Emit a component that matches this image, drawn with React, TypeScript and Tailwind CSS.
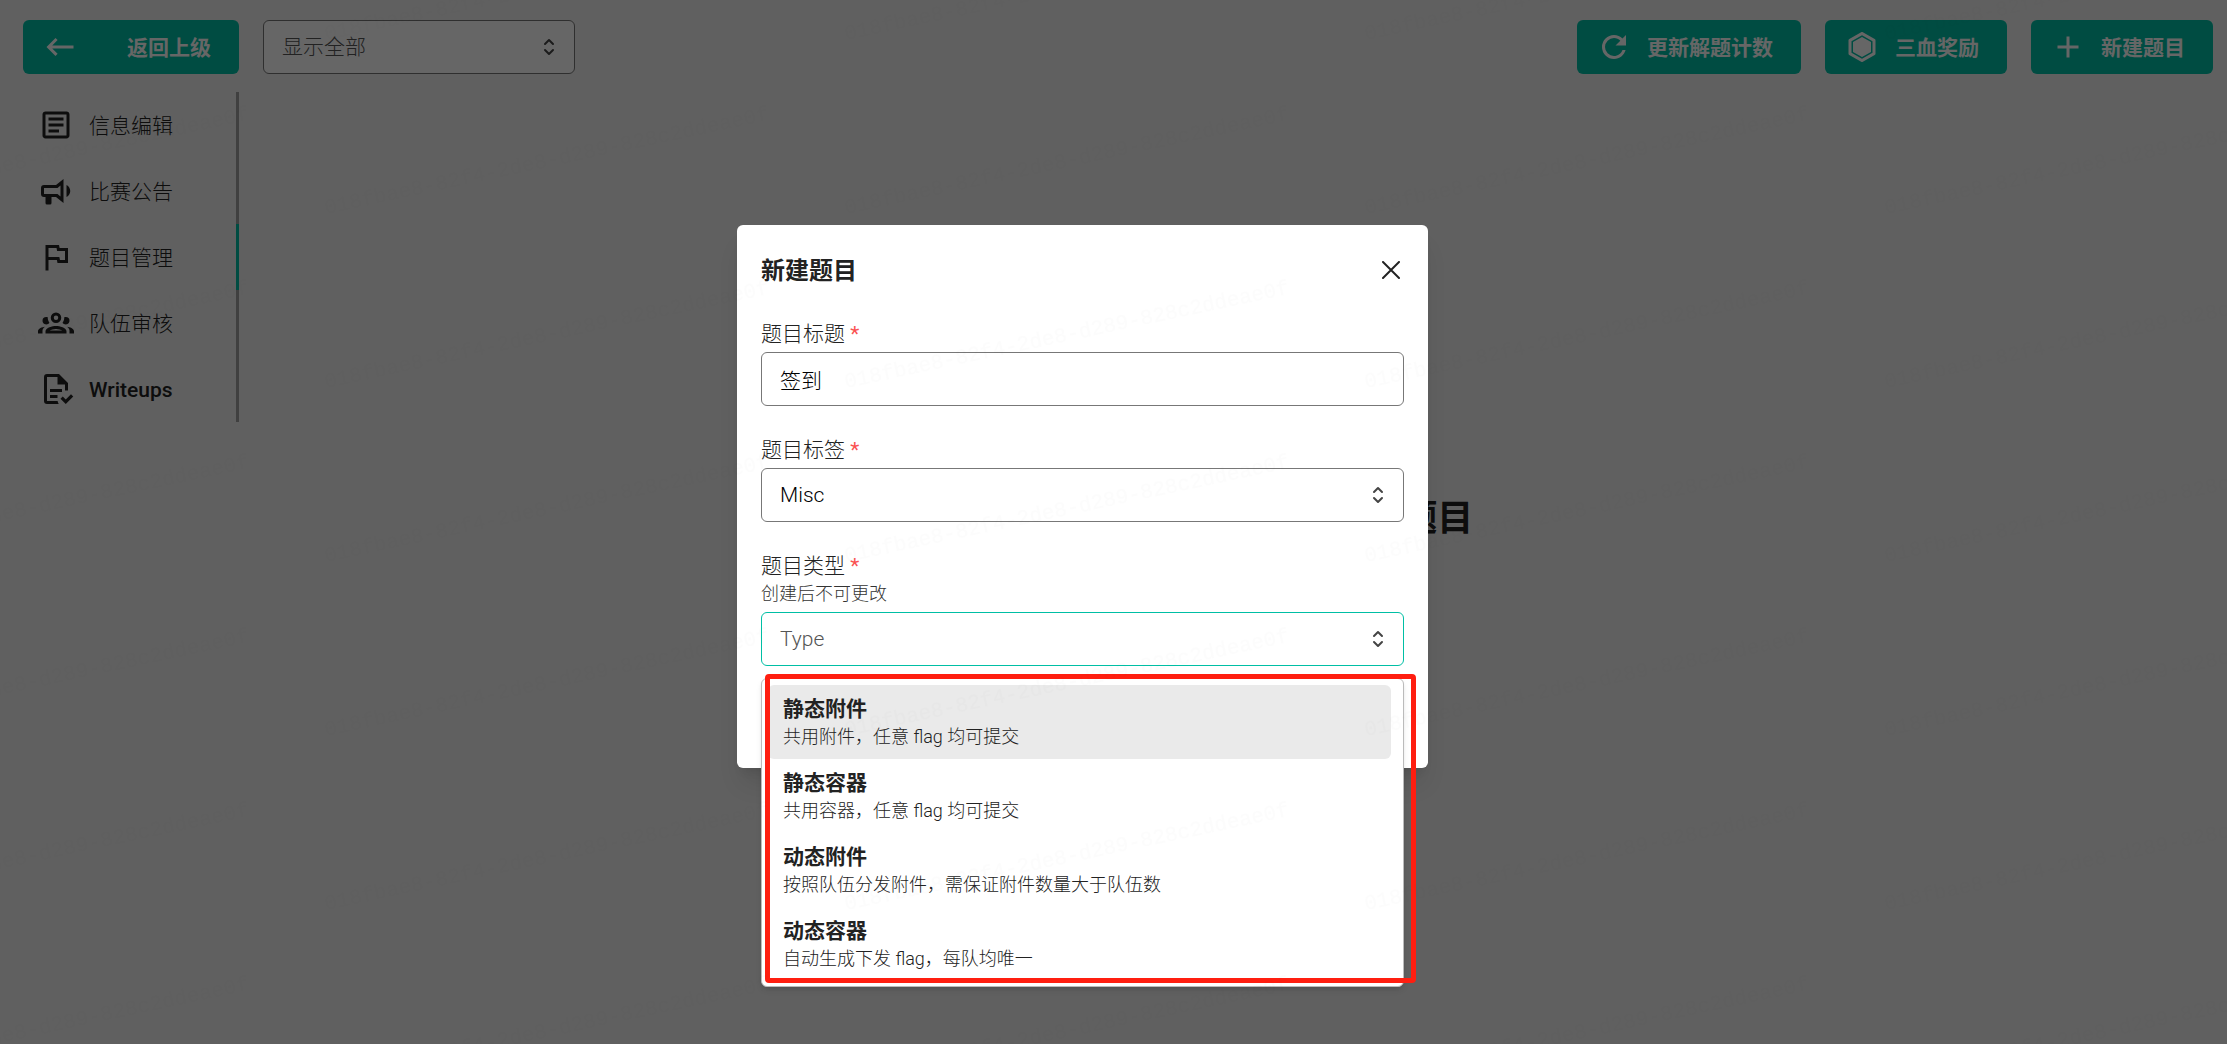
import { useState } from 'react';
import type { ReactNode } from 'react';

const icons = {
  back: 'M21,11H6.83L10.41,7.41L9,6L3,12L9,18L10.41,16.58L6.83,13H21V11Z',
  refresh:
    'M17.65,6.35C16.2,4.9 14.21,4 12,4A8,8 0 0,0 4,12A8,8 0 0,0 12,20C15.73,20 18.84,17.45 19.73,14H17.65C16.83,16.33 14.61,18 12,18A6,6 0 0,1 6,12A6,6 0 0,1 12,6C13.66,6 15.14,6.69 16.22,7.78L13,11H20V4L17.65,6.35Z',
  hexagon:
    'M21,16.5C21,16.88 20.79,17.21 20.47,17.38L12.57,21.82C12.41,21.94 12.21,22 12,22C11.79,22 11.59,21.94 11.43,21.82L3.53,17.38C3.21,17.21 3,16.88 3,16.5V7.5C3,7.12 3.21,6.79 3.53,6.62L11.43,2.18C11.59,2.06 11.79,2 12,2C12.21,2 12.41,2.06 12.57,2.18L20.47,6.62C20.79,6.79 21,7.12 21,7.5V16.5M12,4.15L5,8.09V15.91L12,19.85L19,15.91V8.09L12,4.15M12,5.3L18,8.68V15.32L12,18.7L6,15.32V8.68L12,5.3Z',
  plus: 'M19,13H13V19H11V13H5V11H11V5H13V11H19V13Z',
  textBox:
    'M5,3C3.89,3 3,3.89 3,5V19C3,20.11 3.89,21 5,21H19C20.11,21 21,20.11 21,19V5C21,3.89 20.11,3 19,3H5M5,5H19V19H5V5M7,7V9H17V7H7M7,11V13H17V11H7M7,15V17H14V15H7Z',
  bullhorn:
    'M12,8H4A2,2 0 0,0 2,10V14A2,2 0 0,0 4,16H5V20A1,1 0 0,0 6,21H8A1,1 0 0,0 9,20V16H12L17,20V4L12,8M15,15.6L13,14H4V10H13L15,8.4V15.6M21.5,12C21.5,13.71 20.54,15.26 19,16V8C20.53,8.75 21.5,10.3 21.5,12Z',
  flag: 'M12.36,6L12.76,8H18V14H14.64L14.24,12H7V6H12.36M14,4H5V21H7V14H12.6L13,16H20V6H14.4L14,4Z',
  group:
    'M12,5A3.5,3.5 0 0,0 8.5,8.5A3.5,3.5 0 0,0 12,12A3.5,3.5 0 0,0 15.5,8.5A3.5,3.5 0 0,0 12,5M12,7A1.5,1.5 0 0,1 13.5,8.5A1.5,1.5 0 0,1 12,10A1.5,1.5 0 0,1 10.5,8.5A1.5,1.5 0 0,1 12,7M5.5,8A2.5,2.5 0 0,0 3,10.5C3,11.44 3.53,12.25 4.29,12.68C4.65,12.88 5.06,13 5.5,13C5.94,13 6.35,12.88 6.71,12.68C7.08,12.47 7.39,12.17 7.62,11.81C6.89,10.86 6.5,9.7 6.5,8.5C6.5,8.41 6.5,8.31 6.5,8.22C6.2,8.08 5.86,8 5.5,8M18.5,8C18.14,8 17.8,8.08 17.5,8.22C17.5,8.31 17.5,8.41 17.5,8.5C17.5,9.7 17.11,10.86 16.38,11.81C16.5,12 16.63,12.15 16.78,12.3C16.94,12.45 17.1,12.58 17.29,12.68C17.65,12.88 18.06,13 18.5,13C18.94,13 19.35,12.88 19.71,12.68C20.47,12.25 21,11.44 21,10.5A2.5,2.5 0 0,0 18.5,8M12,14C9.66,14 5,15.17 5,17.5V19H19V17.5C19,15.17 14.34,14 12,14M4.71,14.55C2.78,14.78 0,15.76 0,17.5V19H3V17.07C3,16.06 3.69,15.22 4.71,14.55M19.29,14.55C20.31,15.22 21,16.06 21,17.07V19H24V17.5C24,15.76 21.22,14.78 19.29,14.55M12,16C13.53,16 15.24,16.5 16.23,17H7.77C8.76,16.5 10.47,16 12,16Z',
  fileCheck:
    'M23.5,17L18.5,22L15,18.5L16.5,17L18.5,19L22,15.5L23.5,17M6,2A2,2 0 0,0 4,4V20A2,2 0 0,0 6,22H13.81C13.45,21.38 13.2,20.7 13.08,20H6V4H13V9H18V13.08C18.33,13.03 18.67,13 19,13C19.34,13 19.67,13.03 20,13.08V8L14,2M8,12V14H16V12M8,16V18H13V16Z',
};

const tabs: { label: string; icon: keyof typeof icons }[] = [
  { label: '信息编辑', icon: 'textBox' },
  { label: '比赛公告', icon: 'bullhorn' },
  { label: '题目管理', icon: 'flag' },
  { label: '队伍审核', icon: 'group' },
  { label: 'Writeups', icon: 'fileCheck' },
];

const challengeTypes = [
  { label: '静态附件', desc: '共用附件，任意 flag 均可提交' },
  { label: '静态容器', desc: '共用容器，任意 flag 均可提交' },
  { label: '动态附件', desc: '按照队伍分发附件，需保证附件数量大于队伍数' },
  { label: '动态容器', desc: '自动生成下发 flag，每队均唯一' },
];

function Icon({ name }: { name: keyof typeof icons }) {
  return (
    <svg viewBox="0 0 24 24" className="size-9 shrink-0 fill-current" fillRule="evenodd" aria-hidden="true">
      <path d={icons[name]} />
    </svg>
  );
}

function ActionButton({ icon, className = '', children }: { icon: keyof typeof icons; className?: string; children: ReactNode }) {
  return (
    <button
      type="button"
      className={`flex h-[54px] shrink-0 items-center gap-[15px] rounded-md bg-[#00bfa5] pr-7 pl-[19px] font-bold text-white ${className}`}
    >
      <Icon name={icon} />
      <span className="pt-0.5">{children}</span>
    </button>
  );
}

function Chevrons() {
  return (
    <svg
      viewBox="0 0 24 24"
      className="pointer-events-none col-start-1 row-start-1 mr-[14px] size-6 self-center justify-self-end"
      fill="none"
      stroke="#444"
      strokeWidth="2"
      strokeLinecap="round"
      strokeLinejoin="round"
      aria-hidden="true"
    >
      <path d="M8 9l4-4l4 4M16 15l-4 4l-4-4" />
    </svg>
  );
}

const fieldClass = 'col-start-1 row-start-1 h-[54px] w-full appearance-none rounded-md border bg-white px-[18px]';

function FieldLabel({ htmlFor, children }: { htmlFor: string; children: ReactNode }) {
  return (
    <label htmlFor={htmlFor} className="block h-[34px] leading-8">
      {children}
      <span className="font-normal text-[#fa5252]"> *</span>
    </label>
  );
}

function Watermark() {
  return (
    <svg className="pointer-events-none absolute inset-0 size-full" aria-hidden="true">
      <defs>
        <pattern id="watermark" x="840" y="260" width="520" height="174" patternUnits="userSpaceOnUse">
          <text
            x="6"
            y="128"
            transform="rotate(-12 6 128)"
            className="fill-black/1 font-['Liberation_Mono',monospace] text-[21px]"
          >
            018fbae8-82f4-2de8-d289-828c2ddeae0f
          </text>
        </pattern>
      </defs>
      <rect width="100%" height="100%" fill="url(#watermark)" />
    </svg>
  );
}

export default function App() {
  const [title, setTitle] = useState('签到');
  const [type, setType] = useState('');

  return (
    <div className="relative flex min-h-screen flex-col bg-[#f0f0f0] font-['Roboto','Noto_Sans_CJK_SC',sans-serif] text-[21px] leading-8 font-light text-[#222]">
      <header className="flex items-center gap-6 pt-5 pr-[14px] pl-[23px]">
        <ActionButton icon="back" className="w-[216px] justify-between">
          返回上级
        </ActionButton>
        <div className="grid w-[312px]">
          <select aria-label="题目筛选" className={`${fieldClass} border-[#777] text-[#555]`}>
            <option>显示全部</option>
          </select>
          <Chevrons />
        </div>
        <div className="ml-auto flex gap-6">
          <ActionButton icon="refresh">更新解题计数</ActionButton>
          <ActionButton icon="hexagon">三血奖励</ActionButton>
          <ActionButton icon="plus">新建题目</ActionButton>
        </div>
      </header>

      <div className="flex flex-1 gap-6 pt-[18px] pr-[14px] pl-[23px]">
        <nav className="flex w-[216px] shrink-0 flex-col">
          {tabs.map((tab) => (
            <a
              key={tab.label}
              href="#"
              className={`flex h-[66px] items-center gap-[15px] border-r-[3px] pl-[15px] ${
                tab.label === '题目管理' ? 'border-[#00bfa5]' : 'border-[#a0a0a0]'
              }`}
            >
              <Icon name={tab.icon} />
              <span className={`pt-0.5 ${tab.label === 'Writeups' ? 'font-medium' : ''}`}>{tab.label}</span>
            </a>
          ))}
        </nav>
        <main className="flex flex-1 flex-col items-center pt-[400px] pl-11">
          <h2 className="text-[36px] leading-[54px] font-bold">Ouch! 这个比赛还没有题目</h2>
        </main>
      </div>

      <div className="absolute inset-0 flex justify-center bg-black/60 pt-[225px] pr-[62px]">
        <section
          role="dialog"
          aria-labelledby="dialog-title"
          className="flex w-[691px] flex-col self-start rounded-md bg-white px-6 pt-6 pb-[102px] shadow-xl"
        >
          <div className="flex h-[42px] items-center justify-between">
            <h1 id="dialog-title" className="pt-0.5 text-2xl font-bold">
              新建题目
            </h1>
            <button type="button" aria-label="关闭" className="flex size-[27px] items-center justify-center">
              <svg viewBox="0 0 18 18" className="size-[18px]" stroke="currentColor" strokeWidth="2" strokeLinecap="round">
                <path d="M1 1L17 17M17 1L1 17" />
              </svg>
            </button>
          </div>

          <form className="flex flex-col gap-7 pt-[27px]">
            <div>
              <FieldLabel htmlFor="title">题目标题</FieldLabel>
              <input
                id="title"
                value={title}
                onChange={(e) => setTitle(e.target.value)}
                className={`${fieldClass} block border-[#777] text-black`}
              />
            </div>
            <div>
              <FieldLabel htmlFor="tag">题目标签</FieldLabel>
              <div className="grid">
                <select id="tag" className={`${fieldClass} border-[#777] text-black`}>
                  <option>Misc</option>
                </select>
                <Chevrons />
              </div>
            </div>
            <div className="relative">
              <FieldLabel htmlFor="type">题目类型</FieldLabel>
              <p className="h-7 text-[18px] leading-5 text-[#333]">创建后不可更改</p>
              <div className="grid">
                <input
                  id="type"
                  role="combobox"
                  aria-expanded="true"
                  aria-controls="type-options"
                  placeholder="Type"
                  value={type}
                  onChange={(e) => setType(e.target.value)}
                  className={`${fieldClass} border-[#00bfa5] placeholder:text-[#555]`}
                />
                <Chevrons />
              </div>
              <ul
                id="type-options"
                role="listbox"
                className="absolute inset-x-0 top-full mt-3 flex flex-col rounded-md border border-[#bbb] bg-white pt-[6px] pr-3 pb-[5px] pl-[6px] shadow-md"
              >
                {challengeTypes.map((item, i) => (
                  <li
                    key={item.label}
                    role="option"
                    aria-selected={i === 0}
                    className={`flex h-[74px] flex-col justify-center rounded-md px-[15px] pt-0.5 ${i === 0 ? 'bg-[#eaeaea]' : ''}`}
                  >
                    <span className="leading-7 font-bold">{item.label}</span>
                    <span className="text-[18px] leading-7">{item.desc}</span>
                  </li>
                ))}
                {/* highlight frame round the options */}
                <div className="pointer-events-none absolute -top-[5px] -right-[13px] bottom-[3px] left-[3px] rounded border-5 border-[#ff1e10]" />
              </ul>
            </div>
          </form>
        </section>
      </div>
      <Watermark />
    </div>
  );
}
